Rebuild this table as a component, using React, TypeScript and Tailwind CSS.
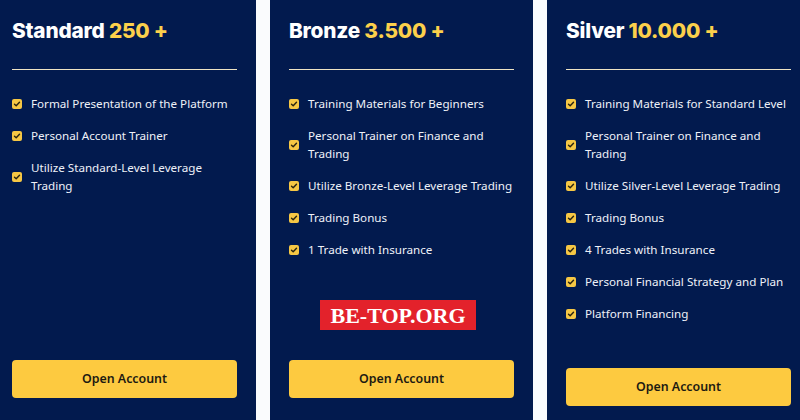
import React from "react";

type Plan = { name: string; amount: string; items: string[] };

const plans: Plan[] = [
  {
    name: "Standard",
    amount: "250 +",
    items: [
      "Formal Presentation of the Platform",
      "Personal Account Trainer",
      "Utilize Standard-Level Leverage Trading",
    ],
  },
  {
    name: "Bronze",
    amount: "3.500 +",
    items: [
      "Training Materials for Beginners",
      "Personal Trainer on Finance and Trading",
      "Utilize Bronze-Level Leverage Trading",
      "Trading Bonus",
      "1 Trade with Insurance",
    ],
  },
  {
    name: "Silver",
    amount: "10.000 +",
    items: [
      "Training Materials for Standard Level",
      "Personal Trainer on Finance and Trading",
      "Utilize Silver-Level Leverage Trading",
      "Trading Bonus",
      "4 Trades with Insurance",
      "Personal Financial Strategy and Plan",
      "Platform Financing",
    ],
  },
];

function Check() {
  return (
    <span className="flex h-[10px] w-[10px] shrink-0 items-center justify-center rounded-[2px] bg-[#f6c744]">
      <svg width="8" height="8" viewBox="0 0 8 8" fill="none">
        <path d="M1.5 4.2 L3.2 5.8 L6.5 2.2" stroke="#2a2410" strokeWidth="1.4" strokeLinecap="round" strokeLinejoin="round" />
      </svg>
    </span>
  );
}

function Card({ plan }: { plan: Plan }) {
  return (
    <div className="flex w-[263px] shrink-0 flex-col bg-[#021a4e] px-[19px] pt-[17px] pb-[40px]">
      <h2 className="text-[20.8px] font-extrabold leading-[28px] tracking-[-0.2px] text-white" style={{ fontFamily: "Inter, 'Noto Sans', sans-serif" }}>
        {plan.name} <span className="text-[#fcd04b]">{plan.amount}</span>
      </h2>
      <div className="mt-[24px] h-px bg-[#efe4c4]" />
      <ul className="mt-[25px] flex min-h-[220px] flex-col gap-[14px]">
        {plan.items.map((it) => (
          <li key={it} className="flex items-center gap-[9px]">
            <Check />
            <span className="text-[11.65px] leading-[18px] text-[#eef1f8]" style={{ fontFamily: "'Noto Sans', sans-serif" }}>
              {it}
            </span>
          </li>
        ))}
      </ul>
      <button className="mt-[45px] h-[38px] w-full rounded-[4px] bg-[#fdca40] text-[12.4px] font-semibold text-[#1d1a12]" style={{ fontFamily: "'Noto Sans', sans-serif" }}>
        Open Account
      </button>
    </div>
  );
}

export default function App() {
  return (
    <div className="relative h-[420px] w-[800px] overflow-hidden bg-[#fafbfd]">
      <div className="ml-[-7px] flex items-start gap-[14px]">
        {plans.map((p) => (
          <Card key={p.name} plan={p} />
        ))}
      </div>
      <div
        className="absolute left-[320px] top-[300px] flex h-[30px] w-[156px] items-center justify-center bg-[#e3222b] text-[22px] font-bold text-white"
        style={{ fontFamily: "'Liberation Serif', serif" }}
      >
        BE-TOP.ORG
      </div>
    </div>
  );
}
